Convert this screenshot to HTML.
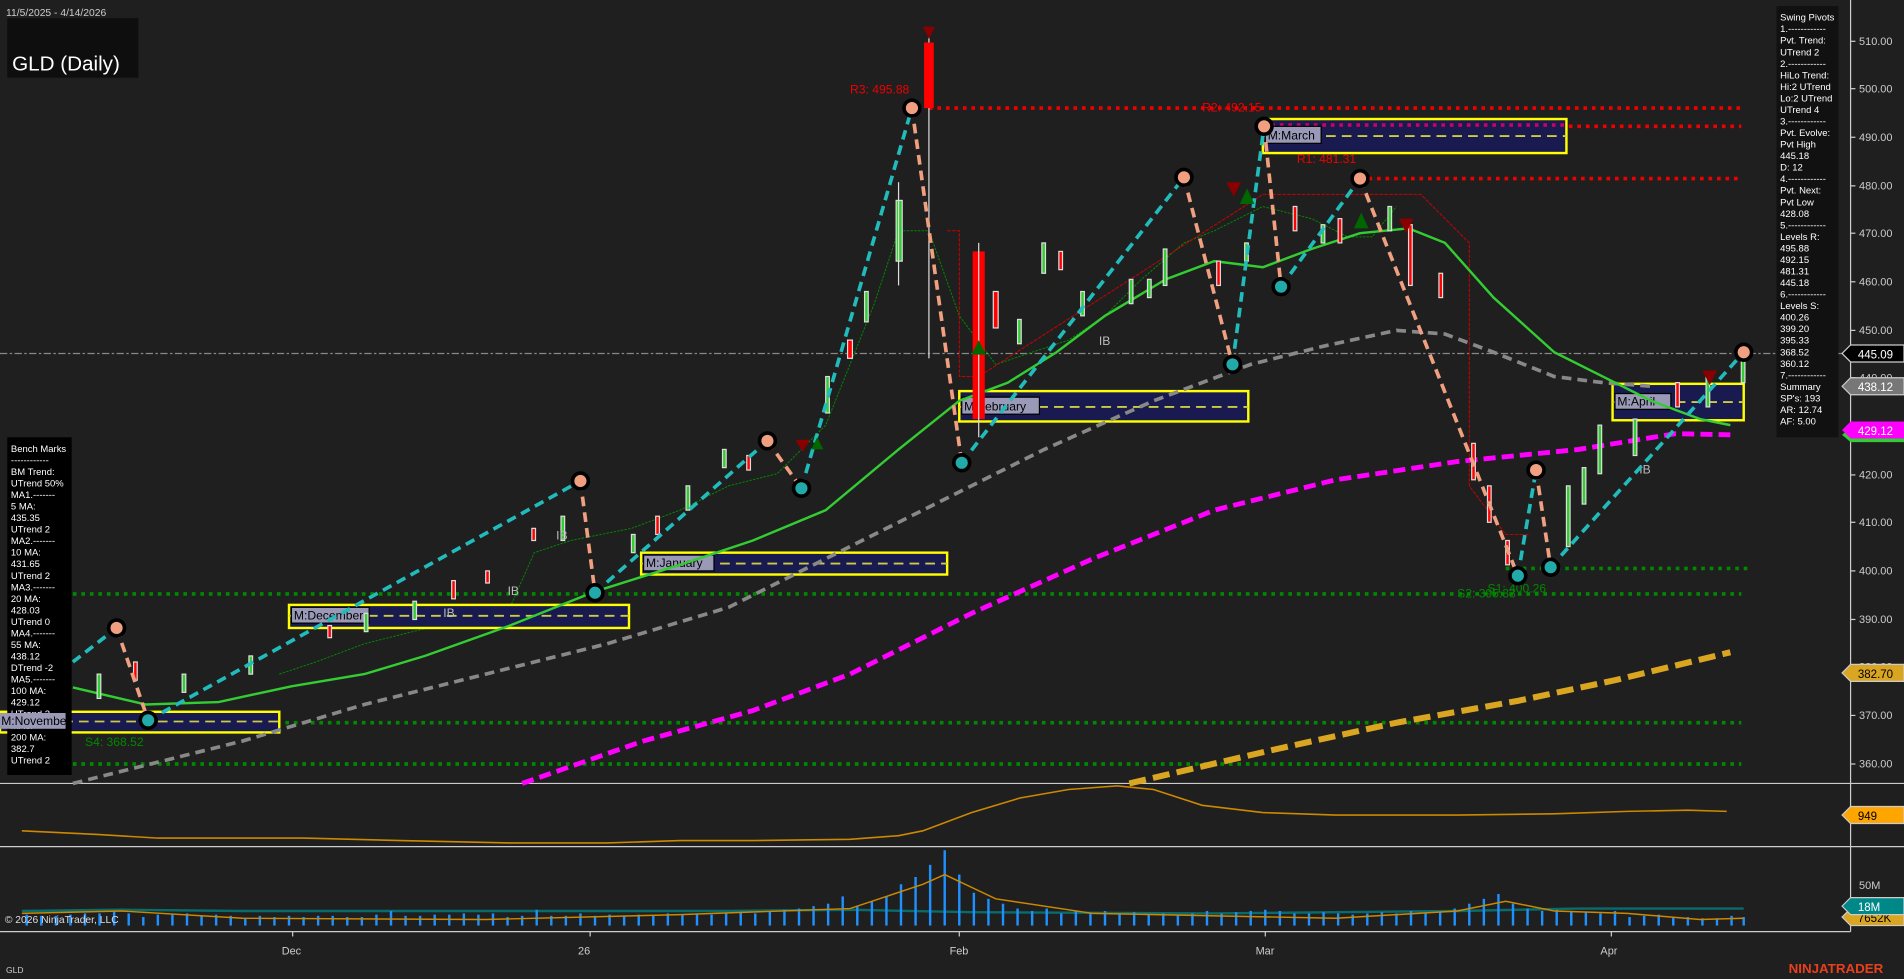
<!DOCTYPE html>
<html><head><meta charset="utf-8"><style>
html,body{margin:0;padding:0;background:#1f1f1f;overflow:hidden}
svg{display:block}
text{font-family:"Liberation Sans",sans-serif}
</style></head><body>
<svg width="1904" height="979" viewBox="0 0 1568 806" preserveAspectRatio="none" xmlns="http://www.w3.org/2000/svg">
<rect width="1568" height="806" fill="#1f1f1f"/>
<line x1="1524" y1="0" x2="1524" y2="767" stroke="#ccc" stroke-width="1"/>
<line x1="0" y1="645" x2="1568" y2="645" stroke="#ccc" stroke-width="1"/>
<line x1="0" y1="697" x2="1568" y2="697" stroke="#ccc" stroke-width="1"/>
<line x1="0" y1="767" x2="1524" y2="767" stroke="#ccc" stroke-width="1"/>
<g fill="#ccc" font-size="9">
<text x="1531" y="37">510.00</text><text x="1531" y="76">500.00</text><text x="1531" y="116">490.00</text><text x="1531" y="156">480.00</text><text x="1531" y="195">470.00</text><text x="1531" y="235">460.00</text><text x="1531" y="275">450.00</text><text x="1531" y="314">440.00</text><text x="1531" y="354">430.00</text><text x="1531" y="394">420.00</text><text x="1531" y="433">410.00</text><text x="1531" y="473">400.00</text><text x="1531" y="513">390.00</text><text x="1531" y="552">380.00</text><text x="1531" y="592">370.00</text><text x="1531" y="632">360.00</text>
<text x="1531" y="732">50M</text>
<text x="232" y="786">Dec</text><text x="476" y="786">26</text><text x="782" y="786">Feb</text><text x="1034" y="786">Mar</text><text x="1318" y="786">Apr</text>
</g>
<g stroke="#ccc"><line x1="1524" y1="34" x2="1528" y2="34"/><line x1="1524" y1="73" x2="1528" y2="73"/><line x1="1524" y1="113" x2="1528" y2="113"/><line x1="1524" y1="153" x2="1528" y2="153"/><line x1="1524" y1="192" x2="1528" y2="192"/><line x1="1524" y1="232" x2="1528" y2="232"/><line x1="1524" y1="272" x2="1528" y2="272"/><line x1="1524" y1="311" x2="1528" y2="311"/><line x1="1524" y1="351" x2="1528" y2="351"/><line x1="1524" y1="391" x2="1528" y2="391"/><line x1="1524" y1="430" x2="1528" y2="430"/><line x1="1524" y1="470" x2="1528" y2="470"/><line x1="1524" y1="510" x2="1528" y2="510"/><line x1="1524" y1="549" x2="1528" y2="549"/><line x1="1524" y1="589" x2="1528" y2="589"/><line x1="1524" y1="629" x2="1528" y2="629"/>
<line x1="241" y1="767" x2="241" y2="771"/><line x1="486" y1="767" x2="486" y2="771"/><line x1="790" y1="767" x2="790" y2="771"/><line x1="1042" y1="767" x2="1042" y2="771"/><line x1="1327" y1="767" x2="1327" y2="771"/></g>

<line x1="0" y1="291" x2="1524" y2="291" stroke="#888" stroke-dasharray="6,2,2,2"/>
<g stroke-width="3" stroke-dasharray="3,4">
<line x1="765" y1="89" x2="1434" y2="89" stroke="#e00"/>
<line x1="1040" y1="104" x2="1434" y2="104" stroke="#e00"/>
<line x1="1120" y1="147" x2="1434" y2="147" stroke="#e00"/>
<line x1="1240" y1="468" x2="1440" y2="468" stroke="#080"/>
<line x1="60" y1="489" x2="1434" y2="489" stroke="#080"/>
<line x1="60" y1="595" x2="1434" y2="595" stroke="#080"/>
<line x1="60" y1="629" x2="1434" y2="629" stroke="#080"/>
</g>
<!-- step trailing lines -->
<polyline fill="none" stroke="#080" stroke-width="0.8" stroke-dasharray="2,1" points="230,555 260,545 300,530 360,515 420,500 440,455 470,445 520,435 560,420 600,400 640,390 680,350 700,300 720,250 740,190 765,190 790,260 820,300 850,290 880,280 910,260 940,230 975,200 1000,190 1040,170 1080,180 1110,195 1130,195 1150,170"/>
<polyline fill="none" stroke="#c00" stroke-width="0.8" stroke-dasharray="3,1" points="780,190 790,190 790,310 806,310 1040,160 1120,160 1170,160 1210,200 1210,400 1240,440 1260,440"/>
<g font-size="10" fill="#e00"><text x="700" y="77">R3: 495.88</text><text x="990" y="92">R2: 492.15</text><text x="1068" y="134">R1: 481.31</text></g>
<g font-size="10" fill="#080"><text x="70" y="614">S4: 368.52</text><text x="1200" y="492">S2: 395.33</text><text x="1225" y="488">S1: 400.26</text></g>

<g stroke="#ff0" stroke-width="2" fill="#181a50">
<rect x="0" y="586" width="230" height="17"/><rect x="238" y="498" width="280" height="19"/><rect x="528" y="455" width="252" height="18"/><rect x="790" y="322" width="238" height="25"/><rect x="1040" y="98" width="250" height="28"/><rect x="1328" y="316" width="108" height="30"/>
</g>
<line x1="1040" y1="103" x2="1290" y2="103" stroke="#c06" stroke-width="3" stroke-dasharray="3,4"/>
<g stroke="#cc4" stroke-width="1.5" stroke-dasharray="8,5">
<line x1="0" y1="594" x2="230" y2="594"/><line x1="238" y1="507" x2="518" y2="507"/><line x1="528" y1="464" x2="780" y2="464"/><line x1="790" y1="335" x2="1028" y2="335"/><line x1="1040" y1="112" x2="1290" y2="112"/><line x1="1328" y1="331" x2="1436" y2="331"/>
</g>
<g font-family="Liberation Mono" font-size="10" fill="#000">
<rect x="240" y="500" width="64" height="13" fill="#9a9ab8" stroke="#000"/><text x="242" y="510">M:December</text>
<rect x="530" y="457" width="58" height="13" fill="#9a9ab8" stroke="#000"/><text x="532" y="467">M:January</text>
<rect x="792" y="327" width="64" height="14" fill="#9a9ab8" stroke="#000"/><text x="794" y="338">M:February</text>
<rect x="1042" y="104" width="46" height="14" fill="#9a9ab8" stroke="#000"/><text x="1044" y="115">M:March</text>
<rect x="1330" y="324" width="46" height="13" fill="#9a9ab8" stroke="#000"/><text x="1332" y="334">M:April</text>
</g>

<polyline fill="none" stroke="#888" stroke-width="3" stroke-dasharray="8,5" points="60,645 120,630 200,610 300,580 400,555 500,530 600,500 700,450 780,410 860,370 950,330 1030,300 1090,285 1150,272 1190,275 1230,290 1280,310 1320,315 1360,318"/>
<polyline fill="none" stroke="#f0f" stroke-width="4" stroke-dasharray="10,5" points="430,645 530,610 620,585 700,555 800,505 900,460 1000,420 1100,395 1200,380 1300,370 1380,357 1425,358"/>
<polyline fill="none" stroke="#daa520" stroke-width="5" stroke-dasharray="14,6" points="930,645 1050,617 1150,595 1250,577 1330,560 1425,537"/>
<polyline fill="none" stroke="#3c3" stroke-width="2" points="60,566 120,580 180,578 240,565 300,555 350,540 420,515 490,487 560,465 620,445 680,420 740,370 790,330 830,315 870,290 910,260 960,230 1000,215 1040,220 1080,205 1120,192 1160,188 1190,200 1230,245 1280,290 1320,310 1360,330 1400,345 1425,350"/>

<g stroke="#ddd" stroke-width="1">
<line x1="765" y1="25" x2="765" y2="295"/><rect x="761" y="35" width="8" height="54" fill="#f00" stroke="none"/>
<rect x="801" y="207" width="10" height="138" fill="#f00" stroke="none"/><line x1="806" y1="200" x2="806" y2="360"/>
<rect x="738" y="165" width="5" height="50" fill="#3c3" stroke="#ddd"/><line x1="740" y1="150" x2="740" y2="235"/>
<rect x="698" y="280" width="4" height="15" fill="#f00"/><rect x="712" y="240" width="3" height="25" fill="#3c3"/>
<rect x="818" y="240" width="4" height="30" fill="#f00"/><rect x="838" y="263" width="3" height="20" fill="#3c3"/><rect x="858" y="200" width="3" height="25" fill="#3c3"/><rect x="872" y="207" width="3" height="15" fill="#f00"/><rect x="890" y="240" width="3" height="20" fill="#3c3"/><rect x="930" y="230" width="3" height="20" fill="#3c3"/><rect x="945" y="230" width="3" height="15" fill="#3c3"/><rect x="958" y="205" width="3" height="30" fill="#3c3"/><rect x="1002" y="215" width="3" height="20" fill="#f00"/><rect x="1025" y="200" width="3" height="15" fill="#3c3"/><rect x="1065" y="170" width="3" height="20" fill="#f00"/><rect x="1088" y="185" width="3" height="15" fill="#3c3"/><rect x="1102" y="180" width="3" height="20" fill="#f00"/><rect x="1143" y="170" width="3" height="20" fill="#3c3"/><rect x="1160" y="185" width="3" height="50" fill="#f00"/><rect x="1185" y="225" width="3" height="20" fill="#f00"/><rect x="1212" y="365" width="3" height="30" fill="#f00"/><rect x="1225" y="400" width="3" height="30" fill="#f00"/><rect x="1240" y="445" width="3" height="20" fill="#f00"/><rect x="1290" y="400" width="3" height="50" fill="#3c3"/><rect x="1303" y="385" width="3" height="30" fill="#3c3"/><rect x="1316" y="350" width="3" height="40" fill="#3c3"/><rect x="1345" y="345" width="3" height="30" fill="#3c3"/><rect x="1380" y="315" width="3" height="20" fill="#f00"/><rect x="1405" y="310" width="3" height="25" fill="#3c3"/><rect x="1434" y="290" width="3" height="25" fill="#3c3"/>
<rect x="595" y="370" width="3" height="15" fill="#3c3"/><rect x="615" y="375" width="3" height="12" fill="#f00"/><rect x="565" y="400" width="3" height="20" fill="#3c3"/><rect x="540" y="425" width="3" height="15" fill="#f00"/><rect x="520" y="440" width="3" height="15" fill="#3c3"/><rect x="680" y="310" width="3" height="30" fill="#3c3"/>
<rect x="438" y="435" width="3" height="10" fill="#f00"/><rect x="462" y="425" width="3" height="20" fill="#3c3"/><rect x="400" y="470" width="3" height="10" fill="#f00"/><rect x="372" y="478" width="3" height="15" fill="#f00"/><rect x="340" y="495" width="3" height="15" fill="#3c3"/><rect x="300" y="505" width="3" height="15" fill="#3c3"/><rect x="270" y="515" width="3" height="10" fill="#f00"/><rect x="205" y="540" width="3" height="15" fill="#3c3"/><rect x="150" y="555" width="3" height="15" fill="#3c3"/><rect x="110" y="545" width="3" height="15" fill="#f00"/><rect x="80" y="555" width="3" height="20" fill="#3c3"/>
</g>
<g font-size="10" fill="#bbb"><text x="905" y="284">IB</text><text x="458" y="444">IB</text><text x="418" y="490">IB</text><text x="1350" y="390">IB</text><text x="365" y="508">IB</text></g>

<g fill="none" stroke-width="3" stroke-dasharray="8,5">
<g stroke="#2bb">
<polyline points="60,545 96,517"/><polyline points="122,593 478,396"/><polyline points="490,488 632,363"/><polyline points="660,402 751,89"/><polyline points="792,381 975,146"/><polyline points="1015,300 1041,104"/><polyline points="1055,236 1120,147"/><polyline points="1250,474 1265,387"/><polyline points="1277,467 1436,290"/>
</g>
<g stroke="#f0a080">
<polyline points="96,517 122,593"/><polyline points="478,396 490,488"/><polyline points="632,363 660,402"/><polyline points="751,89 792,381"/><polyline points="975,146 1015,300"/><polyline points="1041,104 1055,236"/><polyline points="1120,147 1250,474"/><polyline points="1265,387 1277,467"/>
</g></g>
<g stroke="#000" stroke-width="3">
<g fill="#f0a080"><circle cx="96" cy="517" r="6.5"/><circle cx="478" cy="396" r="6.5"/><circle cx="632" cy="363" r="6.5"/><circle cx="751" cy="89" r="6.5"/><circle cx="975" cy="146" r="6.5"/><circle cx="1041" cy="104" r="6.5"/><circle cx="1120" cy="147" r="6.5"/><circle cx="1265" cy="387" r="6.5"/><circle cx="1436" cy="290" r="6.5"/></g>
<g fill="#2aa"><circle cx="122" cy="593" r="6.5"/><circle cx="490" cy="488" r="6.5"/><circle cx="660" cy="402" r="6.5"/><circle cx="792" cy="381" r="6.5"/><circle cx="1015" cy="300" r="6.5"/><circle cx="1055" cy="236" r="6.5"/><circle cx="1250" cy="474" r="6.5"/><circle cx="1277" cy="467" r="6.5"/></g>
</g>
<g fill="#800"><polygon points="760,22 770,22 765,32"/><polygon points="1010,150 1022,150 1016,162"/><polygon points="1152,180 1164,180 1158,192"/><polygon points="1402,305 1414,305 1408,317"/><polygon points="655,362 667,362 661,372"/></g>
<g fill="#060"><polygon points="1021,168 1033,168 1027,155"/><polygon points="1115,188 1127,188 1121,175"/><polygon points="800,292 812,292 806,280"/><polygon points="668,370 678,370 673,360"/></g>

<text x="5" y="13" fill="#ccc" font-size="8.5">11/5/2025 - 4/14/2026</text>
<rect x="6" y="15" width="108" height="49" fill="#0e0e0e"/>
<text x="10" y="58" fill="#fff" font-size="17">GLD (Daily)</text>

<rect x="1463" y="5" width="51" height="355" fill="#111"/>
<g fill="#fff" font-size="7.8">
<text x="1466" y="17">Swing Pivots</text><text x="1466" y="26.5">1.------------</text><text x="1466" y="36">Pvt. Trend:</text><text x="1466" y="45.5">UTrend 2</text><text x="1466" y="55">2.------------</text><text x="1466" y="64.5">HiLo Trend:</text><text x="1466" y="74">Hi:2 UTrend</text><text x="1466" y="83.5">Lo:2 UTrend</text><text x="1466" y="93">UTrend 4</text><text x="1466" y="102.5">3.------------</text><text x="1466" y="112">Pvt. Evolve:</text><text x="1466" y="121.5">Pvt High</text><text x="1466" y="131">445.18</text><text x="1466" y="140.5">D: 12</text><text x="1466" y="150">4.------------</text><text x="1466" y="159.5">Pvt. Next:</text><text x="1466" y="169">Pvt Low</text><text x="1466" y="178.5">428.08</text><text x="1466" y="188">5.------------</text><text x="1466" y="197.5">Levels R:</text><text x="1466" y="207">495.88</text><text x="1466" y="216.5">492.15</text><text x="1466" y="226">481.31</text><text x="1466" y="235.5">445.18</text><text x="1466" y="245">6.------------</text><text x="1466" y="254.5">Levels S:</text><text x="1466" y="264">400.26</text><text x="1466" y="273.5">399.20</text><text x="1466" y="283">395.33</text><text x="1466" y="292.5">368.52</text><text x="1466" y="302">360.12</text><text x="1466" y="311.5">7.------------</text><text x="1466" y="321">Summary</text><text x="1466" y="330.5">SP's: 193</text><text x="1466" y="340">AR: 12.74</text><text x="1466" y="349.5">AF: 5.00</text>
</g>

<rect x="6" y="360" width="53" height="278" fill="#000"/>
<g fill="#fff" font-size="7.8">
<text x="9" y="372">Bench Marks</text><text x="9" y="381.5">------------</text><text x="9" y="391">BM Trend:</text><text x="9" y="400.5">UTrend 50%</text><text x="9" y="410">MA1.-------</text><text x="9" y="419.5">5 MA:</text><text x="9" y="429">435.35</text><text x="9" y="438.5">UTrend 2</text><text x="9" y="448">MA2.-------</text><text x="9" y="457.5">10 MA:</text><text x="9" y="467">431.65</text><text x="9" y="476.5">UTrend 2</text><text x="9" y="486">MA3.-------</text><text x="9" y="495.5">20 MA:</text><text x="9" y="505">428.03</text><text x="9" y="514.5">UTrend 0</text><text x="9" y="524">MA4.-------</text><text x="9" y="533.5">55 MA:</text><text x="9" y="543">438.12</text><text x="9" y="552.5">DTrend -2</text><text x="9" y="562">MA5.-------</text><text x="9" y="571.5">100 MA:</text><text x="9" y="581">429.12</text><text x="9" y="590.5">UTrend 2</text><text x="9" y="600">MA6.-------</text><text x="9" y="609.5">200 MA:</text><text x="9" y="619">382.7</text><text x="9" y="628.5">UTrend 2</text>
</g>
<rect x="0" y="587" width="54" height="13" fill="#9a9ab8"/><text x="1" y="597" font-family="Liberation Mono" font-size="10" fill="#000">M:November</text>

<polyline fill="none" stroke="#c80" stroke-width="1.3" points="18,684 80,687 130,690 250,690 330,692 420,694 500,694 560,692 620,692 700,691 740,688 760,684 800,669 840,657 880,650 920,647 950,650 990,663 1040,669 1100,671 1200,671 1280,670 1340,668 1390,667 1422,668"/>
<polyline fill="none" stroke="#0a6b6b" stroke-width="2" points="18,750 100,749 200,750 400,750 600,750 700,749 800,751 1000,752 1200,750 1300,748 1436,748"/>
<g stroke="#1e90ff" stroke-width="2">
<line x1="22" y1="762" x2="22" y2="753"/><line x1="34" y1="762" x2="34" y2="754"/><line x1="46" y1="762" x2="46" y2="754"/><line x1="58" y1="762" x2="58" y2="753"/><line x1="70" y1="762" x2="70" y2="752"/><line x1="82" y1="762" x2="82" y2="752"/><line x1="94" y1="762" x2="94" y2="750"/><line x1="106" y1="762" x2="106" y2="752"/><line x1="118" y1="762" x2="118" y2="755"/><line x1="130" y1="762" x2="130" y2="753"/><line x1="142" y1="762" x2="142" y2="753"/><line x1="154" y1="762" x2="154" y2="752"/><line x1="166" y1="762" x2="166" y2="754"/><line x1="178" y1="762" x2="178" y2="753"/><line x1="190" y1="762" x2="190" y2="754"/><line x1="202" y1="762" x2="202" y2="756"/><line x1="214" y1="762" x2="214" y2="754"/><line x1="226" y1="762" x2="226" y2="755"/><line x1="238" y1="762" x2="238" y2="754"/><line x1="250" y1="762" x2="250" y2="755"/><line x1="262" y1="762" x2="262" y2="754"/><line x1="274" y1="762" x2="274" y2="754"/><line x1="286" y1="762" x2="286" y2="755"/><line x1="298" y1="762" x2="298" y2="755"/><line x1="310" y1="762" x2="310" y2="753"/><line x1="322" y1="762" x2="322" y2="750"/><line x1="334" y1="762" x2="334" y2="754"/><line x1="346" y1="762" x2="346" y2="754"/><line x1="358" y1="762" x2="358" y2="753"/><line x1="370" y1="762" x2="370" y2="753"/><line x1="382" y1="762" x2="382" y2="752"/><line x1="394" y1="762" x2="394" y2="753"/><line x1="406" y1="762" x2="406" y2="752"/><line x1="418" y1="762" x2="418" y2="755"/><line x1="430" y1="762" x2="430" y2="754"/><line x1="442" y1="762" x2="442" y2="749"/><line x1="454" y1="762" x2="454" y2="754"/><line x1="466" y1="762" x2="466" y2="754"/><line x1="478" y1="762" x2="478" y2="752"/><line x1="490" y1="762" x2="490" y2="754"/><line x1="502" y1="762" x2="502" y2="753"/><line x1="514" y1="762" x2="514" y2="754"/><line x1="526" y1="762" x2="526" y2="753"/><line x1="538" y1="762" x2="538" y2="754"/><line x1="550" y1="762" x2="550" y2="752"/><line x1="562" y1="762" x2="562" y2="753"/><line x1="574" y1="762" x2="574" y2="752"/><line x1="586" y1="762" x2="586" y2="753"/><line x1="598" y1="762" x2="598" y2="752"/><line x1="610" y1="762" x2="610" y2="751"/><line x1="622" y1="762" x2="622" y2="752"/><line x1="634" y1="762" x2="634" y2="750"/><line x1="646" y1="762" x2="646" y2="749"/><line x1="658" y1="762" x2="658" y2="748"/><line x1="670" y1="762" x2="670" y2="746"/><line x1="682" y1="762" x2="682" y2="744"/><line x1="694" y1="762" x2="694" y2="738"/><line x1="706" y1="762" x2="706" y2="746"/><line x1="718" y1="762" x2="718" y2="742"/><line x1="730" y1="762" x2="730" y2="738"/><line x1="742" y1="762" x2="742" y2="728"/><line x1="754" y1="762" x2="754" y2="722"/><line x1="766" y1="762" x2="766" y2="712"/><line x1="778" y1="762" x2="778" y2="700"/><line x1="790" y1="762" x2="790" y2="720"/><line x1="802" y1="762" x2="802" y2="735"/><line x1="814" y1="762" x2="814" y2="740"/><line x1="826" y1="762" x2="826" y2="744"/><line x1="838" y1="762" x2="838" y2="748"/><line x1="850" y1="762" x2="850" y2="750"/><line x1="862" y1="762" x2="862" y2="748"/><line x1="874" y1="762" x2="874" y2="752"/><line x1="886" y1="762" x2="886" y2="750"/><line x1="898" y1="762" x2="898" y2="752"/><line x1="910" y1="762" x2="910" y2="750"/><line x1="922" y1="762" x2="922" y2="752"/><line x1="934" y1="762" x2="934" y2="751"/><line x1="946" y1="762" x2="946" y2="753"/><line x1="958" y1="762" x2="958" y2="752"/><line x1="970" y1="762" x2="970" y2="753"/><line x1="982" y1="762" x2="982" y2="752"/><line x1="994" y1="762" x2="994" y2="750"/><line x1="1006" y1="762" x2="1006" y2="752"/><line x1="1018" y1="762" x2="1018" y2="751"/><line x1="1030" y1="762" x2="1030" y2="750"/><line x1="1042" y1="762" x2="1042" y2="749"/><line x1="1054" y1="762" x2="1054" y2="750"/><line x1="1066" y1="762" x2="1066" y2="752"/><line x1="1078" y1="762" x2="1078" y2="752"/><line x1="1090" y1="762" x2="1090" y2="751"/><line x1="1102" y1="762" x2="1102" y2="752"/><line x1="1114" y1="762" x2="1114" y2="753"/><line x1="1126" y1="762" x2="1126" y2="752"/><line x1="1138" y1="762" x2="1138" y2="751"/><line x1="1150" y1="762" x2="1150" y2="752"/><line x1="1162" y1="762" x2="1162" y2="750"/><line x1="1174" y1="762" x2="1174" y2="752"/><line x1="1186" y1="762" x2="1186" y2="751"/><line x1="1198" y1="762" x2="1198" y2="748"/><line x1="1210" y1="762" x2="1210" y2="744"/><line x1="1222" y1="762" x2="1222" y2="740"/><line x1="1234" y1="762" x2="1234" y2="736"/><line x1="1246" y1="762" x2="1246" y2="744"/><line x1="1258" y1="762" x2="1258" y2="748"/><line x1="1270" y1="762" x2="1270" y2="750"/><line x1="1282" y1="762" x2="1282" y2="749"/><line x1="1294" y1="762" x2="1294" y2="750"/><line x1="1306" y1="762" x2="1306" y2="751"/><line x1="1318" y1="762" x2="1318" y2="752"/><line x1="1330" y1="762" x2="1330" y2="750"/><line x1="1342" y1="762" x2="1342" y2="755"/><line x1="1354" y1="762" x2="1354" y2="754"/><line x1="1366" y1="762" x2="1366" y2="753"/><line x1="1378" y1="762" x2="1378" y2="755"/><line x1="1390" y1="762" x2="1390" y2="755"/><line x1="1402" y1="762" x2="1402" y2="756"/><line x1="1414" y1="762" x2="1414" y2="756"/><line x1="1426" y1="762" x2="1426" y2="754"/><line x1="1436" y1="762" x2="1436" y2="755"/>
</g>
<polyline fill="none" stroke="#c80" stroke-width="1.2" points="18,752 100,750 200,756 400,757 560,753 700,748 760,728 778,720 820,740 900,752 1100,756 1200,750 1240,742 1280,750 1340,752 1400,757 1436,756"/>
<text x="4" y="760" fill="#ddd" font-size="8.5">© 2026 NinjaTrader, LLC</text>
<text x="5" y="801" fill="#ccc" font-size="7">GLD</text>
<text x="1473" y="801" fill="#e8401c" font-size="11" font-weight="bold">NINJATRADER</text>

<g font-size="9.5">
<polygon points="1517,291 1524,284 1568,284 1568,298 1524,298" fill="#000" stroke="#ccc"/><text x="1530" y="295" fill="#fff">445.09</text>
<polygon points="1517,318 1524,311 1568,311 1568,325 1524,325" fill="#777" stroke="#ccc"/><text x="1530" y="322" fill="#fff">438.12</text>
<polygon points="1517,358 1524,352 1568,352 1568,364 1524,364" fill="#3c3"/>
<polygon points="1517,354 1524,347 1568,347 1568,361 1524,361" fill="#f0f"/><text x="1530" y="358" fill="#fff">429.12</text>
<polygon points="1517,554 1524,547 1568,547 1568,561 1524,561" fill="#daa520" stroke="#ccc"/><text x="1530" y="558" fill="#000">382.70</text>
<polygon points="1517,671 1524,664 1568,664 1568,678 1524,678" fill="#ffa500" stroke="#ccc"/><text x="1530" y="675" fill="#000">949</text>
<polygon points="1517,755 1524,748 1568,748 1568,762 1524,762" fill="#daa520" stroke="#ccc"/><text x="1530" y="759" fill="#000">7652K</text>
<polygon points="1517,746 1524,739 1568,739 1568,753 1524,753" fill="#088" stroke="#ccc"/><text x="1530" y="750" fill="#fff">18M</text>
</g>
</svg>
</body></html>
